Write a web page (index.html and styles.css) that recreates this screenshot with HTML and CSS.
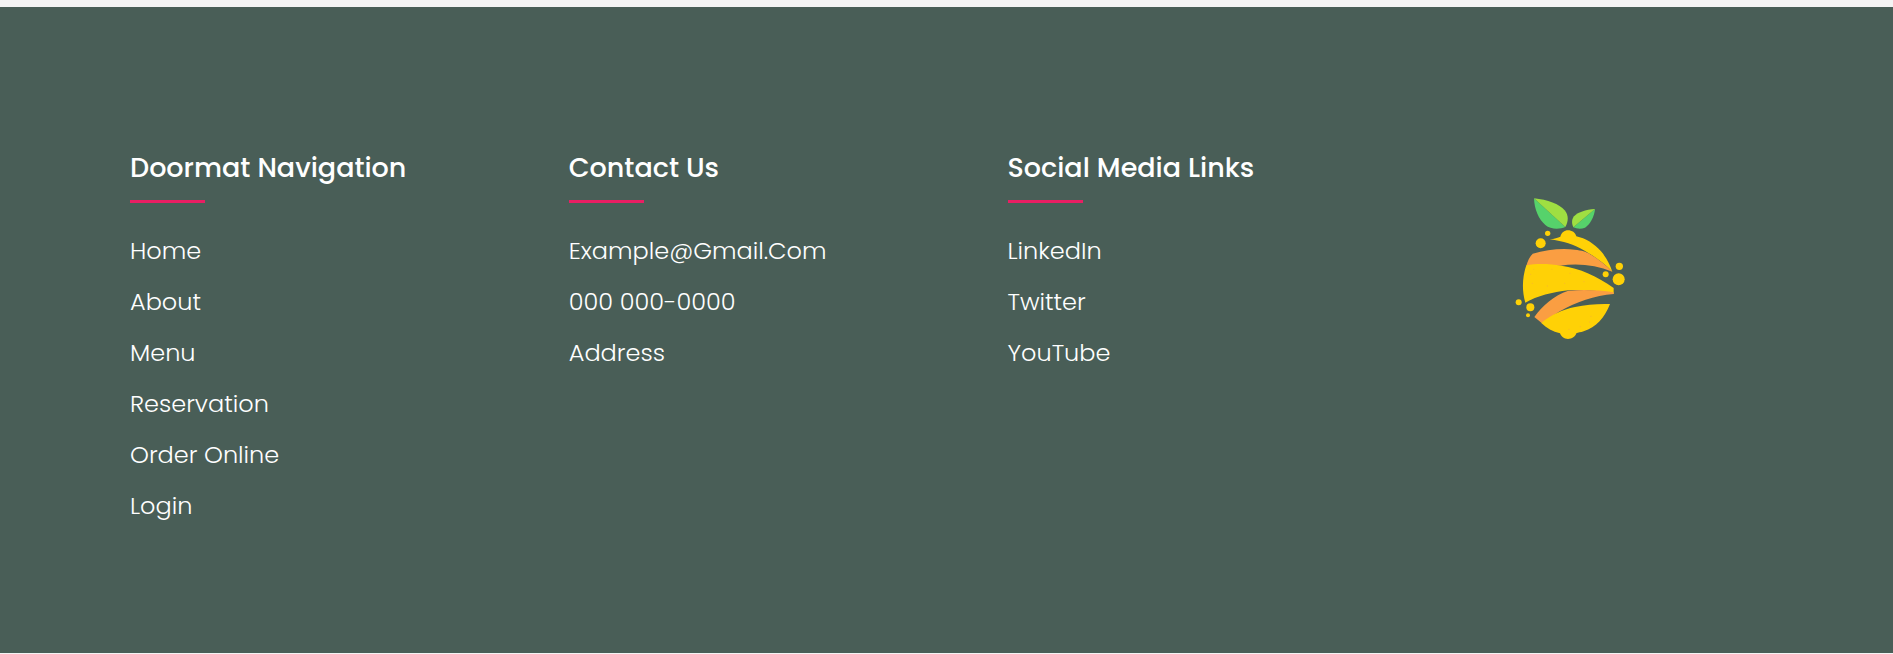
FILE: index.html
```
<!DOCTYPE html>
<html lang="en">
<head>
<meta charset="utf-8">
<meta name="viewport" content="width=device-width, initial-scale=1">
<title>Little Lemon</title>
<link rel="stylesheet" href="styles.css">
</head>
<body>
<footer class="footer">
  <div class="footer-grid">
    <nav class="footer-col" aria-labelledby="nav-title">
      <h4 class="footer-title" id="nav-title">Doormat Navigation</h4>
      <ul class="footer-list">
        <li><a href="#">Home</a></li>
        <li><a href="#">About</a></li>
        <li><a href="#">Menu</a></li>
        <li><a href="#">Reservation</a></li>
        <li><a href="#">Order Online</a></li>
        <li><a href="#">Login</a></li>
      </ul>
    </nav>
    <section class="footer-col">
      <h4 class="footer-title">Contact Us</h4>
      <ul class="footer-list">
        <li><a href="#">Example@Gmail.Com</a></li>
        <li><a href="#">000 000-0000</a></li>
        <li><a href="#">Address</a></li>
      </ul>
    </section>
    <section class="footer-col">
      <h4 class="footer-title">Social Media Links</h4>
      <ul class="footer-list">
        <li><a href="#">LinkedIn</a></li>
        <li><a href="#">Twitter</a></li>
        <li><a href="#">YouTube</a></li>
      </ul>
    </section>
    <div class="footer-brand">
      <svg class="logo" viewBox="0 0 420 495" role="img" aria-label="Lemon logo">
        <path fill="#56d26b" d="M102 40C103 73 116 103 136 120C151 133 178 134 196 126Z"/>
        <path fill="#9fdf42" d="M102 40C143 44 178 57 194 76C207 92 205 110 196 126Z"/>
        <path fill="#56d26b" d="M285 72C283 96 270 118 255 128C244 133 230 132 220 127Z"/>
        <path fill="#9fdf42" d="M285 72C257 74 232 82 222 94C213 106 216 118 220 127Z"/>
        <path fill="#ffd106" d="M149 163C163 162 174 158 181 155C184 143 193 136 204 136C216 136 226 143 229 154C256 160 283 176 303 199C321 220 330 240 337 260C315 237 287 216 254 197C222 179 190 168 149 163Z"/>
        <path fill="#fa9e42" d="M98 206C139 194 185 189 224 194C246 196 258 200 268 206C294 222 319 241 337 260C287 240 235 234 180 242L79 242C83 228 89 216 98 206Z"/>
        <path fill="#ffd106" d="M79 241C111 235 151 237 184 242C240 250 291 273 341 309V327C300 316 251 314 205 316C157 321 112 333 76 353C65 315 67 276 79 241Z"/>
        <path fill="#fa9e42" d="M103 396C128 361 161 332 205 317C252 313 298 315 341 322V327C284 331 228 351 177 380L126 415Z"/>
        <path fill="#ffd106" d="M124 414C153 390 187 374 225 366C259 358 295 356 330 357C315 397 288 427 251 439C242 442 234 443 229 445C226 455 216 462 204 462C192 462 184 455 180 445C159 440 139 429 124 414Z"/>
        <g fill="#ffd106">
          <circle cx="143" cy="145" r="8"/>
          <circle cx="122" cy="175" r="15"/>
          <circle cx="358" cy="244" r="11"/>
          <circle cx="317" cy="268" r="9"/>
          <circle cx="356" cy="283" r="18"/>
          <circle cx="56" cy="352" r="9"/>
          <circle cx="91" cy="367" r="12"/>
          <circle cx="84" cy="391" r="6"/>
        </g>
        <g fill="#f9bd25">
          <circle cx="101" cy="253" r="2"/>
          <circle cx="92" cy="268" r="2"/>
          <circle cx="97" cy="295" r="2"/>
          <circle cx="142" cy="303" r="2"/>
          <circle cx="156" cy="253" r="2"/>
          <circle cx="194" cy="295" r="2"/>
          <circle cx="210" cy="265" r="2"/>
          <circle cx="252" cy="290" r="2"/>
          <circle cx="273" cy="394" r="2"/>
          <circle cx="269" cy="411" r="2"/>
          <circle cx="241" cy="425" r="2"/>
          <circle cx="207" cy="433" r="2"/>
        </g>
      </svg>
    </div>
  </div>
</footer>
</body>
</html>
```
FILE: styles.css
```
* {
  box-sizing: border-box;
  margin: 0;
  padding: 0;
}

body {
  padding-top: 7px;
  background: #f4f4f4;
  font-family: Poppins, Inter, "Open Sans", sans-serif;
  color: #fff;
}

.footer {
  padding: 140px 8px 129px 130px;
  background: #495e57;
}

.footer-grid {
  display: grid;
  grid-template-columns: repeat(4, minmax(0, 1fr));
}

.footer-title {
  margin-bottom: 30px;
  font-size: 27px;
  font-weight: 500;
  line-height: 42px;
}

.footer-title::after {
  content: "";
  display: block;
  width: 75px;
  height: 3px;
  margin-top: 11px;
  background: #e91e63;
}

.footer-list {
  display: grid;
  gap: 15px;
  list-style: none;
}

.footer-list a {
  display: block;
  color: #fff;
  font-size: 24px;
  font-weight: 300;
  line-height: 36px;
  text-decoration: none;
}

.footer-brand {
  padding: 38px 0 0 54px;
}

.logo {
  display: block;
  width: 140px;
  height: auto;
}
```
